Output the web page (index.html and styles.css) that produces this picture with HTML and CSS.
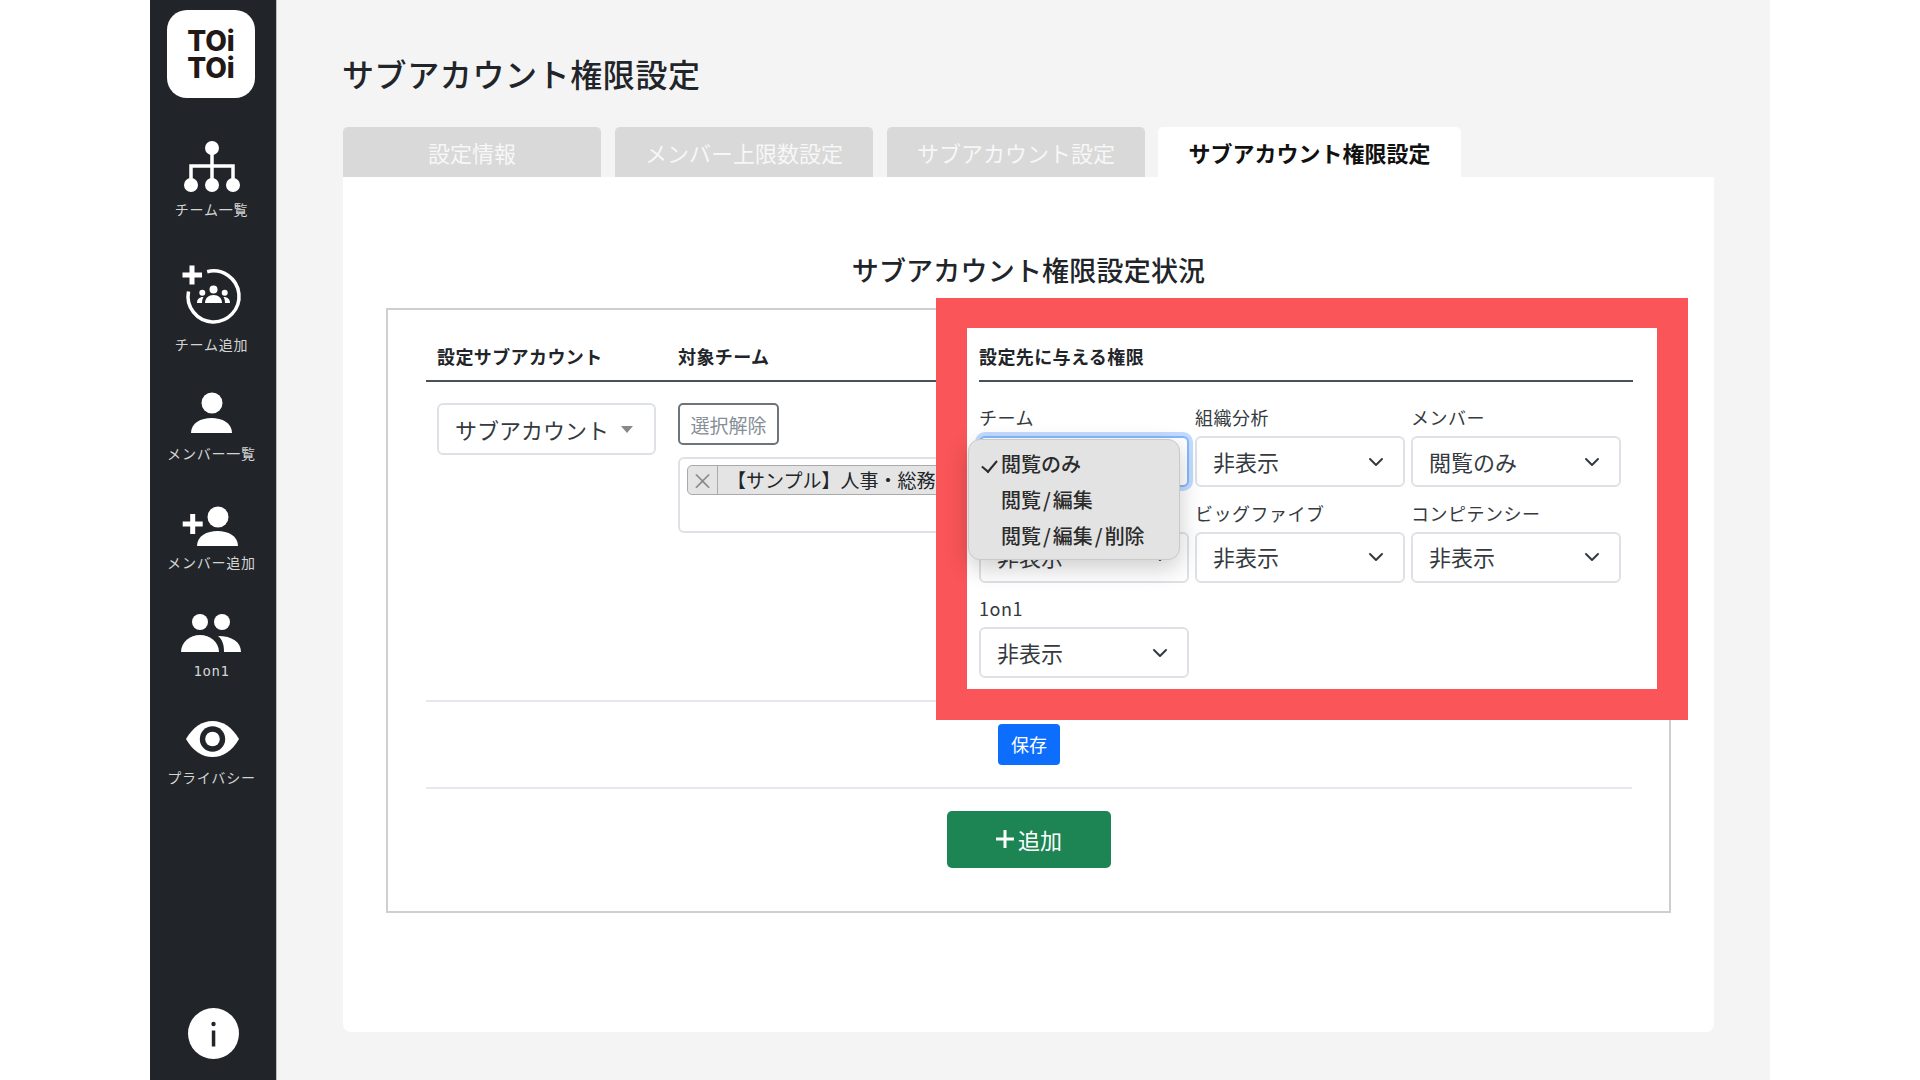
FILE: index.html
```html
<!DOCTYPE html>
<html lang="ja">
	<head>
		<meta charset="UTF-8">
		<title>サブアカウント権限設定</title>
		<link rel="stylesheet" href="styles.css">
	</head>
	<body>
		<div class="frame">
			<aside class="sidebar">
				<div class="logo">TOi<br>TOi</div>
				<a class="nav-item nav-first" href="###">
					<svg viewBox="0 0 70 70"><path class="line" d="M34 18V55M13 55V36H55V55"/><circle cx="34" cy="18" r="7"/><circle cx="13" cy="55" r="7"/><circle cx="34" cy="55" r="7"/><circle cx="55" cy="55" r="7"/></svg>
					<span>チーム一覧</span>
				</a>
				<a class="nav-item nav-team-add" href="###">
					<svg viewBox="0 0 70 70"><path class="line" d="M29.2 6.7A25.5 25.5 0 1 1 10.5 26.5"/><path class="line thick" d="M4.5 10H24M14 .5V19.5"/><circle cx="35.5" cy="24.5" r="4"/><path d="M27 38c0-5 3.500-8 8.500-8s8.500 3 8.500 8z"/><circle cx="24.300" cy="27.700" r="3"/><circle cx="46.700" cy="27.700" r="3"/><path d="M19 38c0-3.500 2-6 6.500-6-1 1.500-1.500 3.500-1.500 6zM52 38c0-3.500-2-6-6.500-6 1 1.500 1.500 3.500 1.500 6z"/></svg>
					<span>チーム追加</span>
				</a>
				<a class="nav-item" href="###">
					<svg viewBox="0 0 70 70"><circle cx="34" cy="29" r="10.500"/><path d="M13 59C13 49 23 44 33.500 44S54 49 54 59Z"/></svg>
					<span>メンバー一覧</span>
				</a>
				<a class="nav-item" href="###">
					<svg viewBox="0 0 70 70"><circle cx="40" cy="34" r="10.500"/><path d="M19 63C19 53 29 48 39.500 48S60 53 60 63Z"/><path class="line thick" d="M4.700 41H24.700M14.700 31V51"/></svg>
					<span>メンバー追加</span>
				</a>
				<a class="nav-item" href="###">
					<svg viewBox="0 0 70 70"><circle cx="22" cy="30" r="8"/><circle cx="44" cy="30" r="8"/><path d="M3 60C3 50 12 43 22 43S41 50 41 60Z"/><path d="M40 44C54 44 63 50 63 60H46C46 52 44 47 40 44Z"/></svg>
					<span class="mono">1on1</span>
				</a>
				<a class="nav-item nav-last" href="###">
					<svg viewBox="0 0 70 70"><path d="M8 41C15 29 24 23 34.500 23S54 29 61 41C54 53 45 59 34.500 59S15 53 8 41Z"/><circle class="pupil" cx="34.500" cy="41" r="12.700"/><circle cx="34.500" cy="41" r="7.300"/></svg>
					<span>プライバシー</span>
				</a>
				<a class="info" href="###">
					<svg viewBox="0 0 51 51"><circle cx="25.500" cy="25.500" r="25.500"/><circle class="pupil" cx="25.500" cy="16" r="2.200"/><path class="pupil" d="M23.800 22.500h3.500v16h-3.500z"/></svg>
				</a>
			</aside>

			<main class="main">
				<h1 class="page-title">サブアカウント権限設定</h1>
				<ul class="tabs">
					<li>設定情報</li>
					<li>メンバー上限数設定</li>
					<li>サブアカウント設定</li>
					<li class="active">サブアカウント権限設定</li>
				</ul>

				<section class="panel">
					<h2 class="panel-title">サブアカウント権限設定状況</h2>
					<div class="status-box">
						<div class="row-head">
							<div class="col-account">設定サブアカウント</div>
							<div>対象チーム</div>
						</div>
						<div class="row-body">
							<div class="col-account">
								<div class="account-select">サブアカウント<i class="caret"></i></div>
							</div>
							<div class="col-team">
								<button class="btn-clear">選択解除</button>
								<div class="multi-box">
									<div class="tag"><span class="tag-x">×</span><span class="tag-text">【サンプル】人事・総務部</span></div>
								</div>
							</div>
						</div>
						<div class="row-save">
							<button class="btn-save">保存</button>
						</div>
						<div class="row-add">
							<button class="btn-add">
								<svg viewBox="0 0 18 18"><path d="M9 0V18M0 9H18"/></svg>
								<span>追加</span>
							</button>
						</div>

						<!-- 赤枠で囲んだ権限の説明部分 -->
						<div class="perm-frame">
							<div class="perm-head">設定先に与える権限</div>
							<div class="perm-grid">
								<div class="field field-open">
									<label>チーム</label>
									<select class="form-select focus"><option>閲覧のみ</option></select>
									<ul class="popup">
										<li class="checked">閲覧のみ</li>
										<li>閲覧<span class="slash">/</span>編集</li>
										<li>閲覧<span class="slash">/</span>編集<span class="slash">/</span>削除</li>
									</ul>
								</div>
								<div class="field">
									<label>組織分析</label>
									<select class="form-select"><option>非表示</option></select>
								</div>
								<div class="field">
									<label>メンバー</label>
									<select class="form-select"><option>閲覧のみ</option></select>
								</div>
								<div class="field">
									<label></label>
									<select class="form-select"><option>非表示</option></select>
								</div>
								<div class="field">
									<label>ビッグファイブ</label>
									<select class="form-select"><option>非表示</option></select>
								</div>
								<div class="field">
									<label>コンピテンシー</label>
									<select class="form-select"><option>非表示</option></select>
								</div>
								<div class="field">
									<label>1on1</label>
									<select class="form-select"><option>非表示</option></select>
								</div>
							</div>
						</div>
					</div>
				</section>
			</main>
		</div>
	</body>
</html>
```

FILE: styles.css
```css
*{
	margin: 0;
	padding: 0;
	box-sizing: border-box;
}
ul{
	list-style: none;
}
a{
	text-decoration: none;
}
body{
	background: #fff;
	color: #212529;
	font-family: "Noto Sans CJK JP", "Noto Sans", sans-serif;
	overflow: hidden;
}
.frame{
	display: flex;
	width: 1620px;
	height: 1080px;
	margin-left: 150px;
	background: #f4f4f4;
	overflow: hidden;
}

/* sidebar */
.sidebar{
	display: flex;
	flex-direction: column;
	align-items: center;
	flex: none;
	width: 126px;
	height: 1080px;
	padding: 10px 0 21px;
	background: #212529;
	box-shadow: 1px 0 0 #bdbdbd;
}
.logo{
	width: 88px;
	height: 88px;
	margin-right: 4px;
	padding-top: 18px;
	border-radius: 20px;
	background: #fff;
	color: #231815;
	font-family: Inter, "Liberation Sans", sans-serif;
	font-size: 28px;
	font-weight: 800;
	line-height: 27px;
	text-align: center;
}
.nav-item{
	display: flex;
	flex-direction: column;
	align-items: center;
	margin-top: 19px;
	color: #d4d4d4;
	font-size: 14px;
	letter-spacing: .8px;
	line-height: 18px;
}
.nav-first{
	margin-top: 32px;
}
.nav-team-add{
	margin-top: 45px;
}
.nav-last{
	margin-top: 16px;
}
.nav-item svg{
	display: block;
	width: 70px;
	height: 70px;
	fill: #fff;
}
.nav-item span{
	margin: 0 3px 2px 0;
	white-space: nowrap;
}
.nav-item .mono{
	font-family: "DejaVu Sans Mono", monospace;
	font-size: 14px;
	letter-spacing: .6px;
}
.line{
	fill: none;
	stroke: #fff;
	stroke-width: 3.5;
}
.line.thick{
	stroke-width: 5;
}
.nav-item svg .line{
	fill: none;
}
.nav-item svg .pupil, .info .pupil{
	fill: #212529;
}
.info{
	display: block;
	width: 51px;
	height: 51px;
	margin-top: auto;
}
.info svg{
	display: block;
	fill: #fff;
}

/* main */
.main{
	flex: none;
	width: 1371px;
	margin-left: 67px;
}
.page-title{
	margin: 50px 0 0 -1px;
	font-size: 32px;
	font-weight: 500;
	letter-spacing: .6px;
	line-height: 46px;
}
.tabs{
	display: flex;
	gap: 14px;
	height: 50px;
	margin-top: 31px;
}
.tabs li{
	width: 258px;
	border-radius: 5px 5px 0 0;
	background: #d9d9d9;
	color: #f7f7f7;
	font-size: 22px;
	line-height: 50px;
	text-align: center;
}
.tabs li.active{
	width: 303px;
	margin-left: -1px;
	background: #fff;
	color: #111;
	font-weight: 700;
}
.panel{
	height: 855px;
	padding: 71px 43px 0;
	border-radius: 0 0 8px 8px;
	background: #fff;
}
.panel-title{
	font-size: 27px;
	font-weight: 500;
	letter-spacing: .2px;
	line-height: 44px;
	text-align: center;
}
.status-box{
	position: relative;
	height: 605px;
	margin-top: 16px;
	padding: 33px 37px 0 38px;
	border: 2px solid #cfcfcf;
}
.row-head{
	display: flex;
	height: 39px;
	border-bottom: 2px solid #495057;
	font-size: 18px;
	font-weight: 700;
	letter-spacing: .4px;
	line-height: 26px;
}
.col-account{
	flex: none;
	width: 252px;
	padding-left: 11px;
}
.row-body{
	display: flex;
	height: 320px;
	padding-top: 21px;
	border-bottom: 2px solid #e6e8ee;
}
.account-select{
	display: flex;
	align-items: center;
	width: 219px;
	height: 52px;
	padding: 0 0 1px 16px;
	border: 2px solid #dee2e6;
	border-radius: 6px;
	font-size: 22px;
	color: #343a40;
}
.caret{
	margin: 2px 0 0 12px;
	border: 6px solid transparent;
	border-top: 7px solid #888;
	border-bottom: 0;
}
.col-team{
	flex: 1;
}
.btn-clear{
	display: block;
	width: 101px;
	height: 42px;
	border: 2px solid #6c757d;
	border-radius: 5px;
	background: #fff;
	color: #868e96;
	font-family: inherit;
	font-size: 19px;
}
.multi-box{
	width: 300px;
	height: 76px;
	margin-top: 12px;
	padding: 6px 7px;
	border: 2px solid #dee2e6;
	border-radius: 6px;
	overflow: hidden;
}
.tag{
	display: flex;
	width: 400px;
	height: 30px;
	border: 1px solid #aaa;
	border-radius: 5px;
	background: #e4e4e4;
	font-size: 19px;
	line-height: 27px;
	white-space: nowrap;
}
.tag-x{
	flex: none;
	width: 30px;
	border-right: 1px solid #aaa;
	color: #888;
	font-size: 22px;
	line-height: 26px;
	text-align: center;
}
.tag-text{
	padding-left: 9px;
}
.row-save{
	display: flex;
	align-items: center;
	justify-content: center;
	height: 87px;
	border-bottom: 2px solid #e6e8ee;
}
.btn-save{
	width: 62px;
	height: 41px;
	padding-bottom: 2px;
	border: 0;
	border-radius: 4px;
	background: #0d6efd;
	color: #fff;
	font-family: inherit;
	font-size: 18px;
}
.row-add{
	display: flex;
	justify-content: center;
	padding-top: 22px;
}
.btn-add{
	display: flex;
	align-items: center;
	justify-content: center;
	gap: 4px;
	width: 164px;
	height: 57px;
	padding-bottom: 2px;
	border: 0;
	border-radius: 5px;
	background: #1c8553;
	color: #fff;
	font-family: inherit;
	font-size: 22px;
}
.btn-add svg{
	width: 18px;
	height: 18px;
	fill: none;
	stroke: #fff;
	stroke-width: 3;
}

/* red frame */
.perm-frame{
	position: absolute;
	top: -12px;
	left: 548px;
	width: 752px;
	height: 422px;
	padding: 0 24px 0 12px;
	border: solid #fa5558;
	border-width: 30px 31px 31px 31px;
	background: #fff;
}
.perm-head{
	height: 54px;
	padding-top: 15px;
	border-bottom: 2px solid #495057;
	font-size: 18px;
	font-weight: 700;
	letter-spacing: .4px;
	line-height: 26px;
}
.perm-grid{
	display: grid;
	grid-template-columns: repeat(3, 210px);
	gap: 12.5px 6px;
	margin-top: 22px;
}
.field{
	position: relative;
}
.field label{
	display: block;
	height: 26px;
	margin-bottom: 6px;
	font-size: 18px;
	letter-spacing: .5px;
	line-height: 26px;
	color: #343a40;
}
.form-select{
	display: block;
	width: 100%;
	height: 51px;
	padding: 0 40px 2px 16px;
	border: 2px solid #dee2e6;
	border-radius: 6px;
	background: #fff url("data:image/svg+xml,%3Csvg xmlns='http://www.w3.org/2000/svg' viewBox='0 0 16 16'%3E%3Cpath fill='none' stroke='%23343a40' stroke-linecap='round' stroke-linejoin='round' stroke-width='2' d='m2 5 6 6 6-6'/%3E%3C/svg%3E") no-repeat right 19px center / 16px 16px;
	color: #343a40;
	font-family: inherit;
	font-size: 22px;
	appearance: none;
}
.form-select.focus{
	border-color: #86b7fe;
	box-shadow: 0 0 0 4px rgba(13, 110, 253, .25);
}
.popup{
	position: absolute;
	top: 35px;
	left: -11px;
	z-index: 2;
	width: 212px;
	height: 121px;
	padding-top: 6px;
	border: 1px solid #c9c9c9;
	border-radius: 12px;
	background: #e3e3e3;
	box-shadow: 0 8px 24px rgba(0, 0, 0, .2);
	font-size: 20px;
	font-weight: 500;
	line-height: 36px;
}
.popup li{
	position: relative;
	padding-left: 32px;
	color: #2b2b2b;
}
.popup .slash{
	margin: 0 2px;
}
.popup li.checked::before{
	content: "";
	position: absolute;
	top: 11px;
	left: 16px;
	width: 7px;
	height: 13px;
	border: solid #2b2b2b;
	border-width: 0 2px 2px 0;
	transform: rotate(40deg);
}
```
